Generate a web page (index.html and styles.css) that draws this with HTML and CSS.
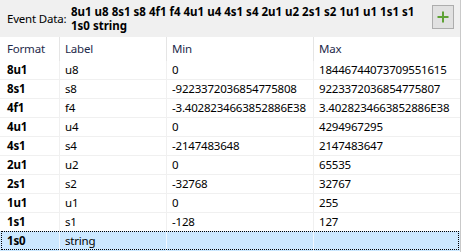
FILE: index.html
```html
<!DOCTYPE html>
<html>
<head>
<meta charset="utf-8">
<link rel="stylesheet" href="styles.css">
</head>
<body>
<div class="frame">
  <div class="top">
    <span class="lbl">Event Data:</span>
    <span class="data">8u1 u8 8s1 s8 4f1 f4 4u1 u4 4s1 s4 2u1 u2 2s1 s2 1u1 u1 1s1 s1 1s0 string</span>
    <button class="add" type="button" aria-label="Add">
      <svg width="12" height="12" viewBox="0 0 12 12"><path d="M6 0.5V11.5M0.5 6H11.5" stroke="#5ea135" stroke-width="2" fill="none"/></svg>
    </button>
  </div>
  <div class="list">
    <div class="row hdr"><div class="c c1">Format</div><div class="c">Label</div><div class="c">Min</div><div class="c c4">Max</div></div>
    <div class="row"><div class="c c1">8u1</div><div class="c">u8</div><div class="c">0</div><div class="c c4">18446744073709551615</div></div>
    <div class="row"><div class="c c1">8s1</div><div class="c">s8</div><div class="c">-9223372036854775808</div><div class="c c4">9223372036854775807</div></div>
    <div class="row"><div class="c c1">4f1</div><div class="c">f4</div><div class="c">-3.4028234663852886E38</div><div class="c c4">3.4028234663852886E38</div></div>
    <div class="row"><div class="c c1">4u1</div><div class="c">u4</div><div class="c">0</div><div class="c c4">4294967295</div></div>
    <div class="row"><div class="c c1">4s1</div><div class="c">s4</div><div class="c">-2147483648</div><div class="c c4">2147483647</div></div>
    <div class="row"><div class="c c1">2u1</div><div class="c">u2</div><div class="c">0</div><div class="c c4">65535</div></div>
    <div class="row"><div class="c c1">2s1</div><div class="c">s2</div><div class="c">-32768</div><div class="c c4">32767</div></div>
    <div class="row"><div class="c c1">1u1</div><div class="c">u1</div><div class="c">0</div><div class="c c4">255</div></div>
    <div class="row"><div class="c c1">1s1</div><div class="c">s1</div><div class="c">-128</div><div class="c c4">127</div></div>
    <div class="row sel"><div class="c c1">1s0</div><div class="c">string</div><div class="c"></div><div class="c c4"></div></div>
  </div>
</div>
</body>
</html>
```
FILE: styles.css
```css
html, body {
  margin: 0;
  padding: 0;
  background: #fff;
}
body {
  width: 462px;
  height: 252px;
  overflow: hidden;
  font-family: "Noto Sans", "Open Sans", sans-serif;
  font-size: 11.5px;
  letter-spacing: -0.2px;
  color: #000;
}
.frame {
  width: 461px;
  height: 252px;
  box-sizing: border-box;
  border-right: 1px solid #c9c9c9;
}
.top {
  height: 37px;
  background: #f0f0f0;
  display: flex;
  align-items: center;
  padding: 0 6px 0 7px;
  box-sizing: border-box;
}
.lbl {
  width: 64px;
  flex: none;
  line-height: 14px;
}
.data {
  flex: 1;
  min-width: 0;
  font-weight: 700;
  letter-spacing: 0;
  line-height: 13.5px;
  margin-right: 5px;
}
.add {
  flex: none;
  align-self: flex-start;
  margin-top: 5px;
  width: 22px;
  height: 24px;
  padding: 0;
  border: 1px solid #adadad;
  background: #e1e1e1;
  display: flex;
  align-items: center;
  justify-content: center;
}
.add svg {
  display: block;
}
.row {
  display: grid;
  grid-template-columns: 60px 107px 147px 1fr;
  height: 19px;
  box-sizing: border-box;
  border-bottom: 1px solid #f0f0f0;
  position: relative;
}
.c {
  border-right: 1px solid #f0f0f0;
  padding-left: 5px;
  white-space: nowrap;
  overflow: hidden;
  line-height: 18px;
}
.c4 {
  border-right: none;
}
.c1 {
  padding-left: 7px;
}
.row .c1 {
  font-weight: 700;
}
.hdr {
  height: 24px;
  border-bottom: none;
}
.hdr .c {
  line-height: 24px;
  border-right-color: #e5e5e5;
  color: #1e2a4a;
}
.hdr .c1 {
  font-weight: 400;
}
.hdr .c4 {
  border-right: none;
}
.sel {
  background: #cce8ff;
  height: 20px;
  margin-top: -1px;
  border-bottom: none;
}
.sel .c {
  border-right-color: #eef6ff;
  line-height: 20px;
}
.sel::after {
  content: "";
  position: absolute;
  top: 0;
  left: 1px;
  right: 1px;
  bottom: 1px;
  border: 1px dotted #000;
  pointer-events: none;
}
```
